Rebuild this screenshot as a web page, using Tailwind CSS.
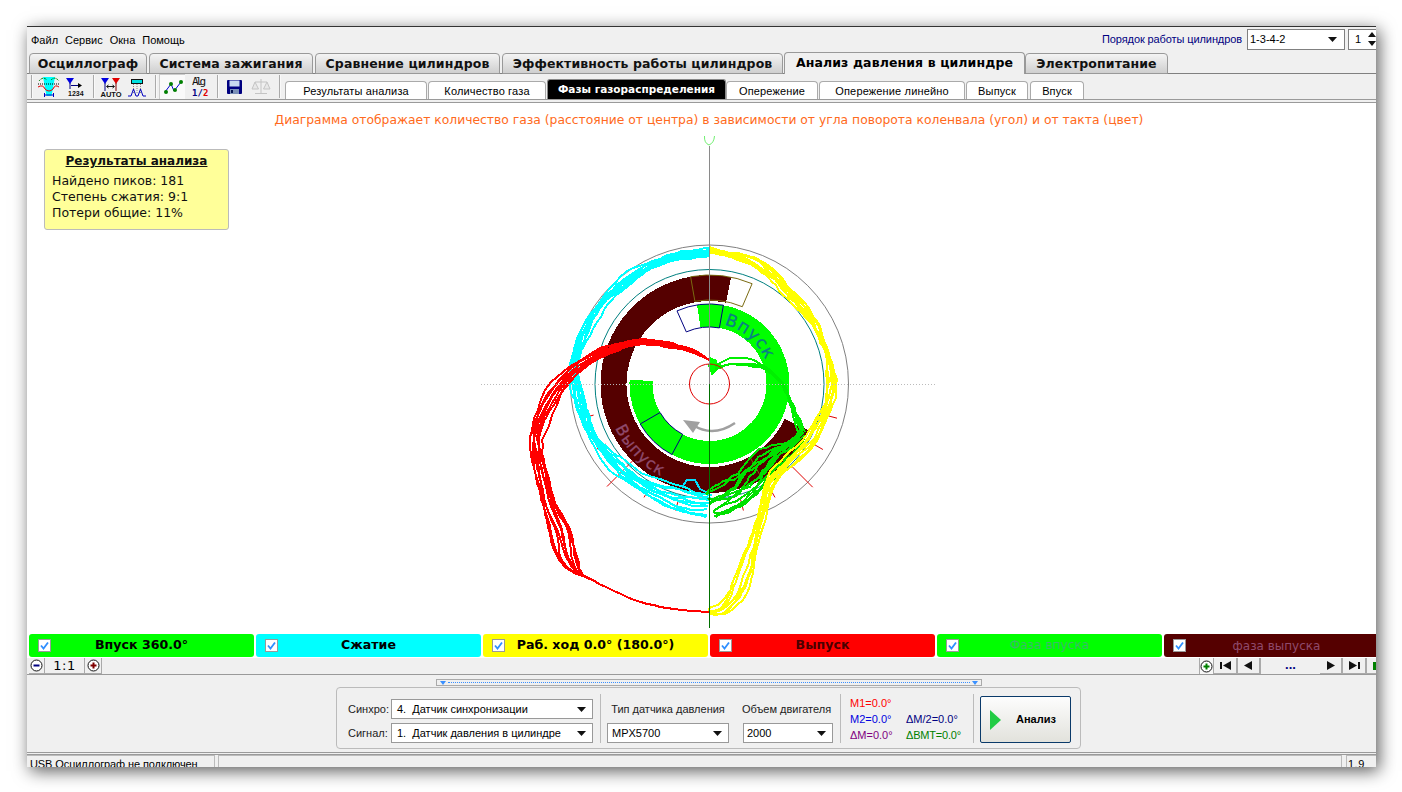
<!DOCTYPE html>
<html lang="ru">
<head>
  <meta charset="UTF-8" />
  <title>Анализ давления в цилиндре</title>
  <script src="https://cdn.jsdelivr.net/npm/@tailwindcss/browser@4"></script>
</head>
<body class="bg-white h-[792px] w-[1402px] overflow-hidden pl-[27px] pt-[27px] [font-family:'Liberation_Sans',sans-serif]">
  <div class="w-[1349px] h-[740px] bg-[#f0f0f0] flex flex-col overflow-hidden border-t border-[#333] -mt-px box-content shadow-[3px_4px_16px_rgba(0,0,0,0.65)] text-black">

    <!-- menu -->
    <div class="h-[25px] flex items-center justify-between text-[11px] shrink-0">
      <div class="flex pl-[4px] gap-[7px] pt-[2px]">
        <span>Файл</span><span>Сервис</span><span>Окна</span><span>Помощь</span>
      </div>
      <div class="flex items-center shrink-0 w-[275px] -mr-[1px]">
        <span class="text-[#000080] w-[145px] shrink-0 whitespace-nowrap tracking-[-0.1px]">Порядок работы цилиндров</span>
        <div class="w-[98px] h-[21px] bg-white border border-[#808080] flex items-center justify-between pl-[2px] pr-[7px] shrink-0">
          <span>1-3-4-2</span>
          <svg width="9" height="5"><polygon points="0,0 9,0 4.5,5" fill="#111"/></svg>
        </div>
        <div class="w-[30px] h-[21px] ml-[3px] bg-white border border-[#808080] flex items-center pl-[6px] gap-[7px] shrink-0">
          <span>1</span>
          <svg width="8" height="15"><polygon points="4,0 8,5 0,5" fill="#111"/><polygon points="0,9 8,9 4,14" fill="#111"/></svg>
        </div>
      </div>
    </div>

    <!-- main tabs -->
    <div class="h-[22px] shrink-0 flex items-end pl-[2px] gap-[2px] border-b border-[#808080] [font-family:'DejaVu_Sans',sans-serif] text-[12.5px] font-bold tracking-[0.1px] whitespace-nowrap">
      <div class="w-[118px] h-[21px] -mb-px pt-px flex items-center justify-center border border-[#999] rounded-t-[4px] bg-gradient-to-b from-[#f4f4f4] to-[#cfcfcf] text-[#111]">Осциллограф</div>
      <div class="w-[164px] h-[21px] -mb-px pt-px flex items-center justify-center border border-[#999] rounded-t-[4px] bg-gradient-to-b from-[#f4f4f4] to-[#cfcfcf] text-[#111]">Система зажигания</div>
      <div class="w-[185px] h-[21px] -mb-px pt-px flex items-center justify-center border border-[#999] rounded-t-[4px] bg-gradient-to-b from-[#f4f4f4] to-[#cfcfcf] text-[#111]">Сравнение цилиндров</div>
      <div class="w-[281px] h-[21px] -mb-px pt-px flex items-center justify-center border border-[#999] rounded-t-[4px] bg-gradient-to-b from-[#f4f4f4] to-[#cfcfcf] text-[#111]">Эффективность работы цилиндров</div>
      <div class="w-[241px] h-[22px] -mb-px -ml-px flex items-center justify-center border border-[#999] border-b-0 rounded-t-[4px] bg-[#f0f0f0] text-black z-10">Анализ давления в цилиндре</div>
      <div class="w-[143px] h-[21px] -mb-px -ml-[2px] pt-px flex items-center justify-center border border-[#999] rounded-t-[4px] bg-gradient-to-b from-[#f4f4f4] to-[#cfcfcf] text-[#111]">Электропитание</div>
    </div>

    <!-- toolbar + sub tabs -->
    <div class="h-[25px] shrink-0 flex items-end">
      <div class="flex items-center h-[25px] pl-[4px] w-[258px] shrink-0">
        <div class="w-[2px] h-[23px] border-l border-[#aaa] bg-white/60"></div>
        <svg width="60" height="25" class="shrink-0">
          <polygon points="10,3 22,3 20,14 18.5,22 13.5,22 12,14" fill="#00ffff"/>
          <path d="M6 7 Q10 2 14 6 M18 6 Q22 2 26 7" stroke="#008000" fill="none" stroke-dasharray="2 1"/>
          <path d="M5 10 H26" stroke="#000" stroke-dasharray="1 1"/>
          <path d="M5 13 Q10 10 12 15 Q16 19 20 15 Q22 10 26 13" stroke="#e00000" fill="none"/>
          <path d="M11 21 H21 M11.5 19 V23 M20.5 19 V23" stroke="#0000c0"/>
          <polygon points="33,4 41,4 37,10" fill="#0000e0"/>
          <path d="M37 9 V15 M38 11.5 H47" stroke="#000080" fill="none"/>
          <polygon points="45,9 49,11.5 45,14" fill="#000"/>
          <text x="35" y="22" font-family="Liberation Sans" font-size="7" font-weight="700" fill="#111">1234</text>
        </svg>
        <div class="w-[2px] h-[23px] border-l border-[#aaa] bg-white/60"></div>
        <svg width="60" height="25" class="shrink-0">
          <polygon points="6,4 14,4 10,10" fill="#0000e0"/>
          <polygon points="17,4 25,4 21,10" fill="#e00000"/>
          <path d="M10 9 V17" stroke="#000080"/><path d="M21 9 V17" stroke="#800000"/>
          <path d="M12 12.5 H19 M13.5 11 L11.5 12.5 L13.5 14 M17.5 11 L19.5 12.5 L17.5 14" stroke="#111" fill="none"/>
          <text x="5.5" y="23" font-family="Liberation Sans" font-size="7.5" font-weight="700" fill="#111">AUTO</text>
          <rect x="36.5" y="5.5" width="11" height="4" fill="#00e0e0" stroke="#111"/>
          <path d="M38.5 10 V19 M42 10 V19 M45.5 10 V19" stroke="#888" stroke-dasharray="1 1"/>
          <path d="M33 22 L36 22 L38.5 15 L41 22 L43 22 L45.5 15 L48 22 L51 22" stroke="#0000c0" fill="none"/>
        </svg>
        <div class="w-[2px] h-[23px] border-l border-[#aaa] bg-white/60"></div>
        <div class="w-[26px] h-[25px] ml-[2px] bg-[#fafafa] border-t border-l border-[#ccc] flex items-center justify-center shrink-0">
          <svg width="22" height="20"><path d="M3 15 L9 7 L12 14 L19 5" stroke="#0000d0" fill="none"/><circle cx="4" cy="15" r="2" fill="#008000"/><circle cx="9" cy="7" r="2" fill="#008000"/><circle cx="13" cy="13" r="2" fill="#008000"/><circle cx="19" cy="5" r="2" fill="#008000"/></svg>
        </div>
        <svg width="31" height="25" class="shrink-0">
          <text x="7" y="11" font-family="DejaVu Sans Mono" font-size="11" fill="#111" textLength="14">Alg</text>
          <text x="7" y="21.5" font-family="DejaVu Sans Mono" font-size="9" font-weight="700" fill="#000080">1/</text>
          <text x="18" y="21.5" font-family="DejaVu Sans Mono" font-size="9" font-weight="700" fill="#e00000">2</text>
        </svg>
        <div class="w-[2px] h-[23px] border-l border-[#aaa] bg-white/60 ml-[1px]"></div>
        <svg width="60" height="25" class="shrink-0">
          <rect x="8" y="6" width="15" height="14" rx="1" fill="#000080"/>
          <rect x="10.5" y="6.5" width="10" height="6" fill="#c8d8f0"/>
          <rect x="11" y="15" width="9" height="5" fill="#7a90b8"/><rect x="12" y="16" width="2" height="3" fill="#001050"/>
          <path d="M42 5 V19 M36 19.5 H48" stroke="#c4c4c4"/><path d="M36 8 H48" stroke="#c4c4c4"/>
          <path d="M36 8 L33 15 H39.5 Z M48 8 L44.5 15 H51 Z" stroke="#c4c4c4" fill="#e8e8e8"/>
        </svg>
        <div class="w-[2px] h-[23px] border-l border-[#aaa] bg-white/60"></div>
      </div>
      <div class="flex items-end text-[11px] text-black h-[25px] tracking-[0.15px] whitespace-nowrap">
        <div class="w-[142px] h-[18px] pt-px flex items-center justify-center bg-white border border-b-0 border-[#aaa] rounded-t-[4px]">Результаты анализа</div>
        <div class="w-[118px] h-[18px] pt-px flex items-center justify-center bg-white border border-b-0 border-[#aaa] rounded-t-[4px] ml-px">Количество газа</div>
        <div class="w-[179px] h-[20px] flex items-center justify-center bg-black text-white font-bold border border-b-0 border-[#888] rounded-t-[3px] ml-px [font-family:'DejaVu_Sans',sans-serif] text-[10.5px] tracking-[0px]">Фазы газораспределения</div>
        <div class="w-[92px] h-[18px] pt-px flex items-center justify-center bg-white border border-b-0 border-[#aaa] rounded-t-[4px]">Опережение</div>
        <div class="w-[146px] h-[18px] pt-px flex items-center justify-center bg-white border border-b-0 border-[#aaa] rounded-t-[4px] ml-px">Опережение линейно</div>
        <div class="w-[62px] h-[18px] pt-px flex items-center justify-center bg-white border border-b-0 border-[#aaa] rounded-t-[4px] ml-px">Выпуск</div>
        <div class="w-[54px] h-[18px] pt-px flex items-center justify-center bg-white border border-b-0 border-[#aaa] rounded-t-[4px] ml-[2px]">Впуск</div>
      </div>
    </div>
    <div class="h-[4px] shrink-0 border-y border-[#9a9a9a]"></div>

    <!-- chart canvas -->
    <div class="h-[530px] shrink-0 bg-white relative overflow-hidden">
      <div class="pt-[8px] text-center text-[12.33px] text-[#ff6a20] [font-family:'DejaVu_Sans',sans-serif] whitespace-nowrap pl-[15px]">Диаграмма отображает количество газа (расстояние от центра) в зависимости от угла поворота коленвала (угол) и от такта (цвет)</div>
      <svg id="chart" class="absolute left-0 top-0" width="1349" height="530" viewBox="27 103 1349 530"></svg>
      <div class="absolute left-[17px] top-[46px] w-[185px] h-[81px] bg-[#ffff99] border border-[#bbb] rounded-[3px] [font-family:'DejaVu_Sans',sans-serif] text-[12.5px] leading-[16px] pl-[7px] text-[#111]">
        <div class="font-bold underline text-center pr-[7px] pt-[3px] pb-[4px] text-[12px]">Результаты анализа</div>
        <div>Найдено пиков: 181</div>
        <div>Степень сжатия: 9:1</div>
        <div>Потери общие: 11%</div>
      </div>
    </div>

    <!-- curve legend -->
    <div class="h-[25px] shrink-0 bg-white flex items-center pl-[2px] gap-[2px] [font-family:'DejaVu_Sans',sans-serif] text-[12.6px] font-bold">
      <div class="w-[225px] h-[23px] rounded-[3px] bg-[#00ff00] flex items-center shrink-0 pl-[9px]">
        <svg width="13" height="13" class="shrink-0"><rect x="0.5" y="0.5" width="12" height="12" fill="#fff" stroke="#999"/><path d="M3 6.5 L5.5 9.5 L10 3.5" stroke="#2f8fff" stroke-width="1.8" fill="none"/></svg>
        <span class="flex-1 text-center pr-[22px]">Впуск 360.0°</span>
      </div>
      <div class="w-[225px] h-[23px] rounded-[3px] bg-[#00ffff] flex items-center shrink-0 pl-[9px]">
        <svg width="13" height="13" class="shrink-0"><rect x="0.5" y="0.5" width="12" height="12" fill="#fff" stroke="#999"/><path d="M3 6.5 L5.5 9.5 L10 3.5" stroke="#2f8fff" stroke-width="1.8" fill="none"/></svg>
        <span class="flex-1 text-center pr-[22px]">Сжатие</span>
      </div>
      <div class="w-[225px] h-[23px] rounded-[3px] bg-[#ffff00] flex items-center shrink-0 pl-[9px]">
        <svg width="13" height="13" class="shrink-0"><rect x="0.5" y="0.5" width="12" height="12" fill="#fff" stroke="#999"/><path d="M3 6.5 L5.5 9.5 L10 3.5" stroke="#2f8fff" stroke-width="1.8" fill="none"/></svg>
        <span class="flex-1 text-center pr-[22px]">Раб. ход 0.0° (180.0°)</span>
      </div>
      <div class="w-[225px] h-[23px] rounded-[3px] bg-[#ff0000] flex items-center shrink-0 pl-[9px]">
        <svg width="13" height="13" class="shrink-0"><rect x="0.5" y="0.5" width="12" height="12" fill="#fff" stroke="#999"/><path d="M3 6.5 L5.5 9.5 L10 3.5" stroke="#2f8fff" stroke-width="1.8" fill="none"/></svg>
        <span class="flex-1 text-center pr-[22px] text-[#4a0000]">Выпуск</span>
      </div>
      <div class="w-[225px] h-[23px] rounded-[3px] bg-[#00ff00] flex items-center shrink-0 pl-[9px]">
        <svg width="13" height="13" class="shrink-0"><rect x="0.5" y="0.5" width="12" height="12" fill="#fff" stroke="#999"/><path d="M3 6.5 L5.5 9.5 L10 3.5" stroke="#2f8fff" stroke-width="1.8" fill="none"/></svg>
        <span class="flex-1 text-center pr-[22px] font-normal text-[12.2px] text-[#3cb96a]">Фаза впуска</span>
      </div>
      <div class="w-[225px] h-[23px] rounded-l-[3px] bg-[#550000] flex items-center shrink-0 pl-[9px]">
        <svg width="13" height="13" class="shrink-0"><rect x="0.5" y="0.5" width="12" height="12" fill="#fff" stroke="#999"/><path d="M3 6.5 L5.5 9.5 L10 3.5" stroke="#2f8fff" stroke-width="1.8" fill="none"/></svg>
        <span class="flex-1 text-center pr-[22px] font-normal text-[12px] text-[#8f4a6c]">фаза выпуска</span>
      </div>
    </div>

    <!-- scroll / zoom row -->
    <div class="h-[17px] shrink-0 border-b border-[#9a9a9a] flex items-start justify-between pl-[2px]">
      <div class="flex h-[16px]">
        <div class="w-[16px] h-[16px] border-r border-b border-[#aaa] flex items-center justify-center">
          <svg width="13" height="13"><circle cx="6.5" cy="6.5" r="5.5" fill="#fff" stroke="#111"/><path d="M3.5 6.5 H9.5" stroke="#000080" stroke-width="2"/></svg>
        </div>
        <div class="w-[40px] h-[16px] border-r border-b border-[#aaa] flex items-center justify-center text-[13px] [font-family:'DejaVu_Sans',sans-serif] tracking-[0.5px]">1:1</div>
        <div class="w-[17px] h-[16px] border-r border-b border-[#aaa] flex items-center justify-center">
          <svg width="13" height="13"><circle cx="6.5" cy="6.5" r="5.5" fill="#fff" stroke="#111"/><path d="M3.5 6.5 H9.5 M6.5 3.5 V9.5" stroke="#800000" stroke-width="2"/></svg>
        </div>
      </div>
      <div class="flex h-[16px] items-center">
        <div class="w-[15px] h-[16px] border-l border-r border-[#aaa] bg-[#f6f6f6] flex items-center justify-center">
          <svg width="13" height="13"><circle cx="6.5" cy="6.5" r="5.5" fill="#fff" stroke="#111"/><path d="M3.5 6.5 H9.5 M6.5 3.5 V9.5" stroke="#008000" stroke-width="2"/></svg>
        </div>
        <div class="w-[24px] h-[16px] border-r-2 border-b border-[#aaa] flex items-center justify-center">
          <svg width="11" height="9"><rect x="0" y="1" width="2" height="7" fill="#111"/><polygon points="11,0 11,9 3,4.5" fill="#111"/></svg>
        </div>
        <div class="w-[23px] h-[16px] border-r-2 border-b border-[#aaa] flex items-center justify-center">
          <svg width="9" height="9"><polygon points="8,0 8,9 0,4.5" fill="#111"/></svg>
        </div>
        <div class="w-[59px] h-[16px] flex items-center justify-center text-[#000080] text-[13px] font-bold pb-[2px]">...</div>
        <div class="w-[23px] h-[16px] border-r-2 border-b border-[#aaa] flex items-center justify-center">
          <svg width="9" height="9"><polygon points="1,0 1,9 9,4.5" fill="#111"/></svg>
        </div>
        <div class="w-[24px] h-[16px] border-r-2 border-b border-[#aaa] flex items-center justify-center">
          <svg width="11" height="9"><polygon points="0,0 0,9 8,4.5" fill="#111"/><rect x="9" y="1" width="2" height="7" fill="#111"/></svg>
        </div>
        <div class="w-[9px] h-[16px] border-b border-[#aaa] flex items-center pl-[6px]">
          <div class="w-[3px] h-[8px] bg-[#008000]"></div>
        </div>
      </div>
    </div>

    <!-- analysis controls -->
    <div class="h-[78px] shrink-0 border-b border-[#9a9a9a] flex flex-col">
      <div class="ml-[409px] mt-[4px] w-[546px] h-[7px] border border-[#aaa] flex items-center justify-between px-[3px] shrink-0">
        <svg width="6" height="4"><polygon points="0,0 6,0 3,4" fill="#3a90ff"/></svg>
        <div class="flex-1 border-t border-dotted border-[#3a90ff] mx-[2px]"></div>
        <svg width="6" height="4"><polygon points="0,0 6,0 3,4" fill="#3a90ff"/></svg>
      </div>
      <div class="ml-[309px] mt-[1px] w-[745px] h-[62px] border border-[#bbb] rounded-[4px] flex items-center pl-[11px] text-[11px] shrink-0">
        <div class="w-[245px] flex flex-col gap-[4px] shrink-0 mt-[6px]">
          <div class="flex items-center">
            <span class="w-[43px] shrink-0 text-[#222]">Синхро:</span>
            <div class="w-[202px] h-[20px] bg-white border border-[#999] flex items-center justify-between pl-[5px] pr-[6px]">
              <span>4.&nbsp; Датчик синхронизации</span>
              <svg width="9" height="5"><polygon points="0,0 9,0 4.5,5" fill="#111"/></svg>
            </div>
          </div>
          <div class="flex items-center">
            <span class="w-[43px] shrink-0 text-[#222]">Сигнал:</span>
            <div class="w-[202px] h-[20px] bg-white border border-[#999] flex items-center justify-between pl-[5px] pr-[6px]">
              <span>1.&nbsp; Датчик давления в цилиндре</span>
              <svg width="9" height="5"><polygon points="0,0 9,0 4.5,5" fill="#111"/></svg>
            </div>
          </div>
        </div>
        <div class="w-px h-[49px] bg-[#bbb] ml-[7px] shrink-0"></div>
        <div class="w-[122px] ml-[6px] flex flex-col gap-[4px] shrink-0 mt-[6px]">
          <div class="h-[20px] flex items-center justify-center text-[#222] whitespace-nowrap">Тип датчика давления</div>
          <div class="h-[20px] bg-white border border-[#999] flex items-center justify-between pl-[4px] pr-[6px]">
            <span>MPX5700</span>
            <svg width="9" height="5"><polygon points="0,0 9,0 4.5,5" fill="#111"/></svg>
          </div>
        </div>
        <div class="w-[90px] ml-[14px] flex flex-col gap-[4px] shrink-0 mt-[6px]">
          <div class="h-[20px] flex items-center justify-center text-[#222] whitespace-nowrap pr-[3px]">Объем двигателя</div>
          <div class="h-[20px] bg-white border border-[#999] flex items-center justify-between pl-[3px] pr-[6px]">
            <span>2000</span>
            <svg width="9" height="5"><polygon points="0,0 9,0 4.5,5" fill="#111"/></svg>
          </div>
        </div>
        <div class="w-px h-[49px] bg-[#bbb] ml-[7px] shrink-0"></div>
        <div class="w-[132px] pl-[9px] pt-[2px] grid grid-cols-[56px_1fr] leading-[16px] text-[11px] shrink-0 whitespace-nowrap">
          <span class="text-[#ff0000]">M1=0.0°</span><span></span>
          <span class="text-[#0000e0]">M2=0.0°</span><span class="text-[#000080]">ΔM/2=0.0°</span>
          <span class="text-[#800080]">ΔM=0.0°</span><span class="text-[#008000] tracking-[-0.2px]">ΔBMT=0.0°</span>
        </div>
        <div class="w-px h-[49px] bg-[#bbb] shrink-0"></div>
        <div class="ml-[6px] mt-[3px] w-[91px] h-[47px] border border-[#0a3a6a] rounded-[2px] bg-gradient-to-b from-[#fdfdfd] to-[#e2e2dc] flex items-center pl-[9px] shrink-0">
          <svg width="11" height="20" class="shrink-0"><polygon points="0,0 11,10 0,20" fill="#22cc44"/></svg>
          <span class="font-bold ml-[15px]">Анализ</span>
        </div>
      </div>
    </div>

    <!-- status bar -->
    <div class="h-[2px] shrink-0 border-b border-[#9a9a9a]"></div>
    <div class="flex-1 flex text-[11px] gap-[3px] overflow-hidden leading-[13px] min-h-0">
      <div class="w-[188px] pl-[3px] border-t border-r border-[#bbb] pt-[2px] whitespace-nowrap overflow-hidden shrink-0 tracking-[-0.1px]">USB Осциллограф не подключен</div>
      <div class="w-[1124px] border-t border-x border-[#bbb] shrink-0"></div>
      <div class="flex-1 border-t border-l border-[#bbb] pl-[1px] pt-[2px] ml-[1px] tracking-[0.5px]">1.9</div>
    </div>
  </div>

  <script>
    const CX = 709.5, CY = 384;
    const pol = (deg, r) => {
      const a = deg * Math.PI / 180;
      return [CX + r * Math.sin(a), CY - r * Math.cos(a)];
    };
    const fmt = p => p[0].toFixed(1) + " " + p[1].toFixed(1);

    function sector(r1, r2, a, b) {
      const large = b - a > 180 ? 1 : 0;
      return "M" + fmt(pol(a, r2)) + "A" + r2 + " " + r2 + " 0 " + large + " 1 " + fmt(pol(b, r2)) +
        "L" + fmt(pol(b, r1)) + "A" + r1 + " " + r1 + " 0 " + large + " 0 " + fmt(pol(a, r1)) + "Z";
    }

    // small seeded generator so the traces are the same every run
    let seed = 4711;
    const rnd = () => {
      seed = (seed * 16807) % 2147483647;
      return seed / 2147483647;
    };

    function spline(pts, step) {
      const out = [];
      for (let i = 0; i < pts.length - 1; i++) {
        const p0 = pts[Math.max(i - 1, 0)], p1 = pts[i], p2 = pts[i + 1], p3 = pts[Math.min(i + 2, pts.length - 1)];
        const n = Math.max(1, Math.round(Math.hypot(p2[0] - p1[0], p2[1] - p1[1]) / step));
        for (let k = 0; k < n; k++) {
          const t = k / n, t2 = t * t, t3 = t2 * t;
          const f = j => 0.5 * (2 * p1[j] + (p2[j] - p0[j]) * t + (2 * p0[j] - 5 * p1[j] + 4 * p2[j] - p3[j]) * t2 + (3 * p1[j] - p0[j] - 3 * p2[j] + p3[j]) * t3);
          const nx = -(p2[1] - p0[1]), ny = p2[0] - p0[0], len = Math.hypot(nx, ny) || 1;
          out.push([f(0), f(1), f(2), nx / len, ny / len]);
        }
      }
      // last point keeps the normal of the one before, so a bundle ends as wide as it arrives
      const e = pts[pts.length - 1], prev = out[out.length - 1];
      out.push([e[0], e[1], e[2], prev[3], prev[4]]);
      return out;
    }

    function bundle(pts, color, count, jitter, wob) {
      const path = spline(pts, 7);
      let s = "";
      for (let i = 0; i < count; i++) {
        const o = count > 1 ? (i / (count - 1)) * 2 - 1 : 0;
        const ph1 = rnd() * 6.28, ph2 = rnd() * 6.28;
        const d = path.map((q, n) => {
          const w = Math.min(1, q[2]);
          const wave = wob * w * (Math.sin(n * 0.22 + ph1) + 0.6 * Math.sin(n * 0.61 + ph2));
          const jx = (rnd() - 0.5) * jitter * w, jy = (rnd() - 0.5) * jitter * w;
          const off = o * q[2] + wave;
          return Math.round(q[0] + q[3] * off + jx) + "," + Math.round(q[1] + q[4] * off + jy);
        }).join(" ");
        s += '<polyline points="' + d + '" fill="none" stroke="' + color + '" stroke-width="2" stroke-linejoin="round"/>';
      }
      return s;
    }

    const polarPts = list => list.map(v => { const p = pol(v[0], v[1]); return [p[0], p[1], v[2]]; });

    const cyan = polarPts([[0,132,1],[-12,132,2],[-25,132,3],[-40,132,4],[-55,134,4],[-70,136,3],[-85,135,3],[-100,131,3],[-115,127,4],[-130,123,6],[-145,120,8],[-160,119,10],[-172,121,12],[-179.5,121.5,12.5]]);
    const yellow = [[709,251,1],[745,258,2],[765,270,3],[783,287,3],[805,310,4],[820,335,4],[830,360,3],[832,385,3],[826,410,3],[810,440,4],[790,460,5],[772,482,5],[763,510,5],[755,540,6],[746,570,7],[735,595,7],[722,610,4],[709,612,0.5]];
    const red = [[709,360,0],[695,352,0.8],[673,345,2],[643,342,2.5],[617,347,3],[597,355,3],[573,372,5],[553,395,7],[541,420,7],[536,447,6],[547,497,7],[560,530,10],[567,557,9],[577,571,3],[583,575,0.3],[627,597,0],[667,608,0],[709,612,0]];
    const green1 = [[715,368,0.5],[725,364,2],[740,362,3],[760,366,2],[775,375,2],[785,390,2],[795,415,2],[802,433,2]];
    const green2 = [[802,433,2],[792,445,6],[775,458,12],[757,475,14],[738,492,13],[722,500,13],[710,505,13]];

    let svg = "";
    svg += '<g shape-rendering="crispEdges">';
    svg += '<path d="' + sector(83, 109, 115, 371.5) + '" fill="#550000"/>';
    svg += '<path d="' + sector(57, 80, -9, 273) + '" fill="#00ff00"/>';
    svg += '</g>';
    svg += '<circle cx="' + CX + '" cy="' + CY + '" r="139" fill="none" stroke="#808080"/>';
    svg += '<circle cx="' + CX + '" cy="' + CY + '" r="114.5" fill="none" stroke="#008080"/>';
    svg += '<path d="' + sector(84, 109, -10, 23) + '" fill="none" stroke="#7a6a10"/>';
    svg += '<path d="' + sector(57, 80, -24, 10) + '" fill="none" stroke="#000080"/>';
    svg += '<path d="' + sector(57, 80, -152, -120) + '" fill="none" stroke="#000080"/>';
    const t1 = pol(151, 84), t2 = pol(151, 109);
    svg += '<path d="M' + fmt(t1) + 'L' + fmt(t2) + '" stroke="#7a6a10"/>';

    // curved captions
    svg += '<defs><path id="arcIn" d="M' + fmt(pol(14, 61)) + 'A61 61 0 0 1 ' + fmt(pol(85, 61)) + '"/>';
    svg += '<path id="arcOut" d="M' + fmt(pol(-115, 104)) + 'A104 104 0 0 0 ' + fmt(pol(-185, 104)) + '"/></defs>';
    svg += '<text font-family="DejaVu Sans" font-size="17" fill="#0a7f86" stroke="#0a7f86" stroke-width="0.3" letter-spacing="0.8"><textPath href="#arcIn">Впуск</textPath></text>';
    svg += '<text font-family="DejaVu Sans" font-size="16" fill="#8f4a6c" stroke="#8f4a6c" stroke-width="0.3" letter-spacing="1"><textPath href="#arcOut">Выпуск</textPath></text>';

    // grey rotation arrow
    svg += '<path d="M735 423 Q713 438 693 425" fill="none" stroke="#a0a0a0" stroke-width="2.5"/>';
    svg += '<polygon points="683,420 700,422 693,433" fill="#a0a0a0"/>';

    // red angle marks
    [[135,117,146],[225,108,145],[120,120,131],[105,120,132],[255,120,131],[240,120,131],[150,120,131],[165,120,131],[195,120,131],[210,120,131]].forEach(m => {
      svg += '<path d="M' + fmt(pol(m[0], m[1])) + 'L' + fmt(pol(m[0], m[2])) + '" stroke="#e00000" fill="none"/>';
    });

    svg += '<g shape-rendering="crispEdges">';
    svg += bundle(cyan, "#00ffff", 11, 1.5, 2.2);
    svg += '<polyline points="682,487 687,480 695,480 700,489 708,493" fill="none" stroke="#00e0ff" stroke-width="2"/>';
    svg += '<polygon points="710,357 717,360 716,368 712,376 708,366" fill="#00ff00"/>';
    svg += '<polygon points="712,360 722,365 712,376" fill="#00ff00"/>';
    svg += bundle(green1, "#00f000", 4, 1.5, 1.5);
    svg += bundle(green2, "#00e000", 11, 2.5, 3);
    svg += bundle(yellow, "#ffff00", 8, 1.5, 2);
    svg += bundle(red, "#ff0000", 9, 1, 1.4);
    svg += '</g>';

    // centre circle and axes
    svg += '<circle cx="' + CX + '" cy="' + CY + '" r="20" fill="none" stroke="#e00000"/>';
    svg += '<path d="M481 384.5H936" stroke="#bbbbbb" stroke-dasharray="1 2" shape-rendering="crispEdges"/>';
    svg += '<path d="M709.5 146V384" stroke="#8a8a8a" shape-rendering="crispEdges"/>';
    svg += '<path d="M709.5 384V628" stroke="#007000" shape-rendering="crispEdges"/>';
    svg += '<path d="M704.5 136 Q704 143 709 145 Q714 143 714.5 136" fill="none" stroke="#70f070"/>';

    document.getElementById("chart").innerHTML = svg;
  </script>
</body>
</html>
